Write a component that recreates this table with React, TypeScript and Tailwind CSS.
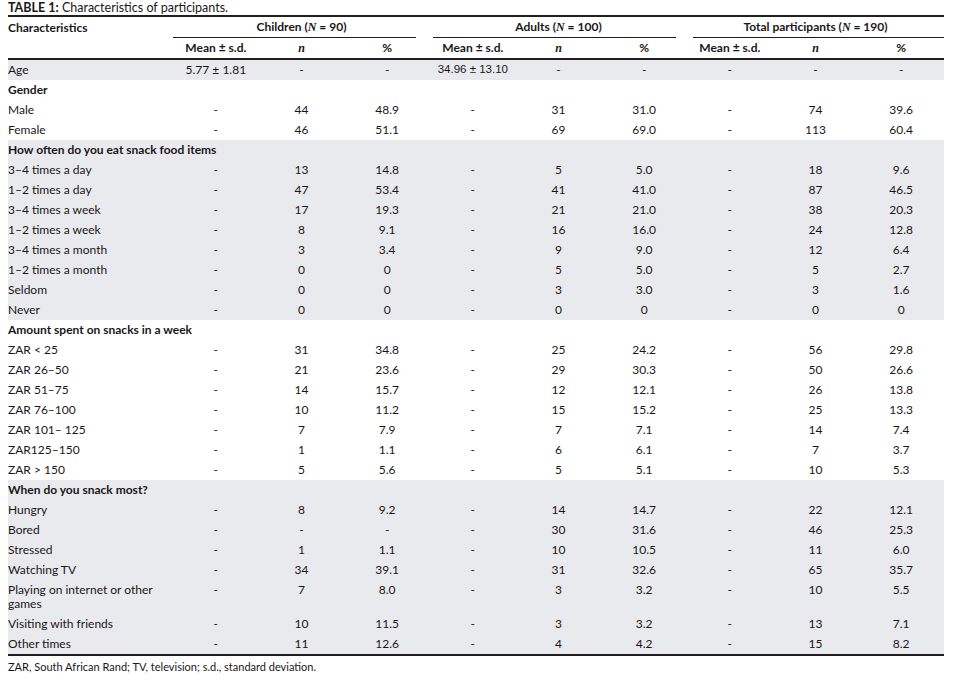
import React from "react";

type Row = { label: string; vals?: string[]; section?: boolean; gray: boolean; tall?: boolean };

const d = (arr: string) => arr.split(",");

const rows: Row[] = [
  { label: "Age", vals: ["5.77 ± 1.81", "-", "-", "34.96 ± 13.10", "-", "-", "-", "-", "-"], gray: true },
  { label: "Gender", section: true, gray: false },
  { label: "Male", vals: d("-,44,48.9,-,31,31.0,-,74,39.6"), gray: false },
  { label: "Female", vals: d("-,46,51.1,-,69,69.0,-,113,60.4"), gray: false },
  { label: "How often do you eat snack food items", section: true, gray: true },
  { label: "3–4 times a day", vals: d("-,13,14.8,-,5,5.0,-,18,9.6"), gray: true },
  { label: "1–2 times a day", vals: d("-,47,53.4,-,41,41.0,-,87,46.5"), gray: true },
  { label: "3–4 times a week", vals: d("-,17,19.3,-,21,21.0,-,38,20.3"), gray: true },
  { label: "1–2 times a week", vals: d("-,8,9.1,-,16,16.0,-,24,12.8"), gray: true },
  { label: "3–4 times a month", vals: d("-,3,3.4,-,9,9.0,-,12,6.4"), gray: true },
  { label: "1–2 times a month", vals: d("-,0,0,-,5,5.0,-,5,2.7"), gray: true },
  { label: "Seldom", vals: d("-,0,0,-,3,3.0,-,3,1.6"), gray: true },
  { label: "Never", vals: d("-,0,0,-,0,0,-,0,0"), gray: true },
  { label: "Amount spent on snacks in a week", section: true, gray: false },
  { label: "ZAR < 25", vals: d("-,31,34.8,-,25,24.2,-,56,29.8"), gray: false },
  { label: "ZAR 26–50", vals: d("-,21,23.6,-,29,30.3,-,50,26.6"), gray: false },
  { label: "ZAR 51–75", vals: d("-,14,15.7,-,12,12.1,-,26,13.8"), gray: false },
  { label: "ZAR 76–100", vals: d("-,10,11.2,-,15,15.2,-,25,13.3"), gray: false },
  { label: "ZAR 101– 125", vals: d("-,7,7.9,-,7,7.1,-,14,7.4"), gray: false },
  { label: "ZAR125–150", vals: d("-,1,1.1,-,6,6.1,-,7,3.7"), gray: false },
  { label: "ZAR > 150", vals: d("-,5,5.6,-,5,5.1,-,10,5.3"), gray: false },
  { label: "When do you snack most?", section: true, gray: true },
  { label: "Hungry", vals: d("-,8,9.2,-,14,14.7,-,22,12.1"), gray: true },
  { label: "Bored", vals: d("-,-,-,-,30,31.6,-,46,25.3"), gray: true },
  { label: "Stressed", vals: d("-,1,1.1,-,10,10.5,-,11,6.0"), gray: true },
  { label: "Watching TV", vals: d("-,34,39.1,-,31,32.6,-,65,35.7"), gray: true },
  { label: "Playing on internet or other games", vals: d("-,7,8.0,-,3,3.2,-,10,5.5"), gray: true, tall: true },
  { label: "Visiting with friends", vals: d("-,10,11.5,-,3,3.2,-,13,7.1"), gray: true },
  { label: "Other times", vals: d("-,11,12.6,-,4,4.2,-,15,8.2"), gray: true },
];

const grid = "grid grid-cols-[165px_repeat(9,1fr)]";

function Ital({ children }: { children: React.ReactNode }) {
  return <span className="font-['Liberation_Serif',serif] italic">{children}</span>;
}

export default function App() {
  return (
    <div className="w-[953px] h-[684px] bg-white text-[#1a1718] font-['Lato',sans-serif] text-[12px]">
      <div className="mx-[8px] w-[936px]">
        <div className="h-[15px] leading-[15px] text-[12.5px]">
          <span className="font-bold">TABLE 1:</span> Characteristics of participants.
        </div>
        <div className="border-t-2 border-[#231f20]">
          <div className={grid + " h-[21px] items-center"}>
            <div className="font-bold">Characteristics</div>
            <div className="col-span-3 h-full flex flex-col">
              <div className="flex-1 flex items-center justify-center font-bold">
                Children (<Ital>N</Ital>&nbsp;= 90)
              </div>
              <div className="h-px bg-[#231f20] mr-[14px]" />
            </div>
            <div className="col-span-3 h-full flex flex-col">
              <div className="flex-1 flex items-center justify-center font-bold">
                Adults (<Ital>N</Ital>&nbsp;= 100)
              </div>
              <div className="h-px bg-[#231f20] ml-[3px] mr-[11px]" />
            </div>
            <div className="col-span-3 h-full flex flex-col">
              <div className="flex-1 flex items-center justify-center font-bold">
                Total participants (<Ital>N</Ital>&nbsp;= 190)
              </div>
              <div className="h-px bg-[#231f20] ml-[6px]" />
            </div>
          </div>
          <div className={grid + " h-[22px] items-center border-b-2 border-[#231f20] font-bold"}>
            <div />
            {[0, 1, 2].map((g) => (
              <React.Fragment key={g}>
                <div className="text-center">Mean ± s.d.</div>
                <div className="text-center">
                  <Ital>n</Ital>
                </div>
                <div className="text-center">%</div>
              </React.Fragment>
            ))}
          </div>
          <div className="border-b-2 border-[#231f20]">
            {rows.map((r, i) => (
              <div
                key={i}
                className={
                  grid +
                  (r.gray ? " bg-[#e9eaee]" : "") +
                  (r.tall ? " h-[34px] items-start pt-[3px] leading-[14px]" : " h-[20px] items-center")
                }
              >
                {r.section ? (
                  <div className="col-span-10 font-bold">{r.label}</div>
                ) : (
                  <>
                    <div className="pr-2">
                      {r.tall ? (
                        <>
                          <div>Playing on internet or other</div>
                          <div>games</div>
                        </>
                      ) : (
                        r.label
                      )}
                    </div>
                    {r.vals!.map((v, j) => (
                      <div
                        key={j}
                        className={
                          "text-center" + (v === "34.96 ± 13.10" ? " font-['Liberation_Sans',sans-serif] text-[11.5px]" : "")
                        }
                      >
                        {v}
                      </div>
                    ))}
                  </>
                )}
              </div>
            ))}
          </div>
        </div>
        <div className="mt-[3px] leading-[15px] text-[11px]">ZAR, South African Rand; TV, television; s.d., standard deviation.</div>
      </div>
    </div>
  );
}
